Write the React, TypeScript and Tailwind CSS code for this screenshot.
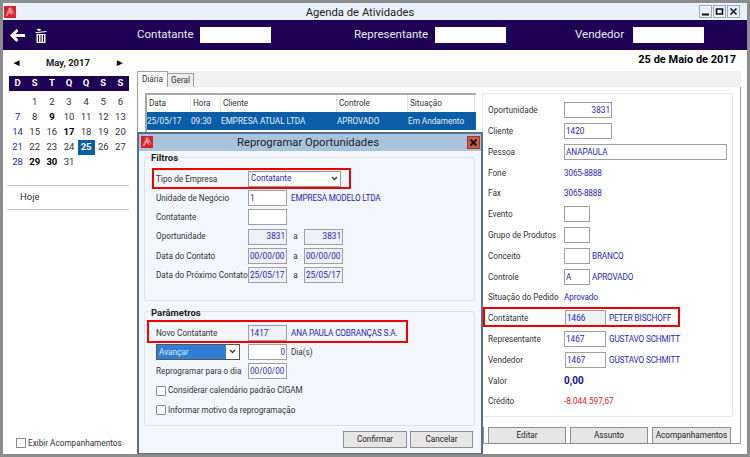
import type { ReactNode } from 'react'

const FONT = "font-['Roboto','Liberation_Sans',Arial,sans-serif]"

function Logo({ className }: { className: string }) {
  return (
    <svg viewBox="0 0 12 12" className={className}>
      <rect width="12" height="12" fill="#d8232a" />
      <path d="M1 11 L5 2 L7 1 L11 9 L8 6 L6 8 L5 5 L3 9 Z" fill="#f08080" />
      <path d="M5 2 L8 9 M3 10 L6 4" stroke="#f7d0d0" strokeWidth="0.7" fill="none" />
    </svg>
  )
}

function Trash() {
  return (
    <svg viewBox="0 0 12 15" className="w-[12px] h-[15px]" fill="#ffffff">
      <path d="M0.5 4.2 L11.5 3 L11.5 4 L0.5 5.2 Z" />
      <path d="M1.5 1.5 L4 0.5 L6.5 2 L4 3 Z" />
      <path d="M1.5 6 H10.5 V15 H1.5 Z M3 7 V14 H4 V7 Z M5.5 7 V14 H6.5 V7 Z M8 7 V14 H9 V7 Z" fillRule="evenodd" />
    </svg>
  )
}

function Arrow() {
  return (
    <svg viewBox="0 0 15 13" className="w-[15px] h-[13px]" fill="#ffffff">
      <path d="M0 6.5 L6.5 0 L8.5 2 L5.5 5 H15 V8 H5.5 L8.5 11 L6.5 13 Z" />
    </svg>
  )
}

function Chevron() {
  return (
    <svg viewBox="0 0 7 5" className="w-[7px] h-[5px] shrink-0" fill="none" stroke="#333333" strokeWidth="1.3">
      <path d="M1 1 L3.5 3.5 L6 1" />
    </svg>
  )
}

function WinButton({ kind }: { kind: 'min' | 'max' | 'close' }) {
  return (
    <span className="w-[13px] h-[13px] border border-[#9aa8b8] bg-[#e9f1fc] flex items-center justify-center">
      <svg viewBox="0 0 9 9" className="w-[9px] h-[9px]" fill="none" stroke="#111111" strokeWidth="1.6">
        {kind === 'min' && <path d="M1 7.5 H8" strokeWidth="2" />}
        {kind === 'max' && <path d="M1.5 2 H7.5 V7 H1.5 Z" />}
        {kind === 'close' && <path d="M1.5 1.5 L7.5 7.5 M7.5 1.5 L1.5 7.5" />}
      </svg>
    </span>
  )
}

function Field({ children, className = '', gray }: { children?: ReactNode; className?: string; gray?: boolean }) {
  return (
    <div
      className={`h-[16px] border border-[#a0a0a0] flex items-center px-[1px] text-[8.2px] text-[#2a1fc0] leading-none overflow-hidden shrink-0 whitespace-nowrap ${
        gray ? 'bg-[#eef2f6]' : 'bg-white'
      } ${className}`}
    >
      {children}
    </div>
  )
}

function Btn({ children, className = '' }: { children?: ReactNode; className?: string }) {
  return (
    <div className={`h-[17px] border border-[#8f8f8f] bg-[#e6e6e6] flex items-center justify-center text-[8.2px] text-[#222] ${className}`}>
      {children}
    </div>
  )
}

function Row({ label, children }: { label: string; children?: ReactNode }) {
  return (
    <div className="relative flex items-center h-[20.8px] text-[8.2px] text-[#333]">
      <span className="shrink-0 w-[76px] whitespace-nowrap">{label}</span>
      {children}
    </div>
  )
}

function Blue({ children, className = '' }: { children: ReactNode; className?: string }) {
  return <span className={`text-[8.2px] tracking-[-0.15px] text-[#2a1fc0] whitespace-nowrap ${className}`}>{children}</span>
}

function RedBox({ className }: { className: string }) {
  return <div className={`absolute border-[2px] border-[#f00000] pointer-events-none ${className}`} />
}

const weeks: (number | null)[][] = [
  [null, 1, 2, 3, 4, 5, 6],
  [7, 8, 9, 10, 11, 12, 13],
  [14, 15, 16, 17, 18, 19, 20],
  [21, 22, 23, 24, 25, 26, 27],
  [28, 29, 30, 31, null, null, null],
]
const boldDays = [9, 17, 29, 30]

function Calendar() {
  return (
    <div className="px-[6px]">
      <div className="flex items-center justify-between px-[5px] h-[26px] text-[9.5px] font-bold text-[#222]">
        <span className="text-[7px] text-black">◀</span>
        <span>May, 2017</span>
        <span className="text-[7px] text-black">▶</span>
      </div>
      <div className="grid grid-cols-7 h-[15px] bg-[#1e0055] text-white text-[9.5px] font-bold items-center text-center w-[120px]">
        {['D', 'S', 'T', 'Q', 'Q', 'S', 'S'].map((d, i) => (
          <span key={i}>{d}</span>
        ))}
      </div>
      <div className="grid grid-cols-7 w-[120px] mt-[4px] text-[9.5px] text-center">
        {weeks.flat().map((d, i) => (
          <span
            key={i}
            className={`h-[15px] flex items-center justify-center ${
              d === 25
                ? 'bg-[#0a5ea8] text-white font-bold'
                : i % 7 === 0
                  ? 'text-[#2a1fc0]'
                  : d !== null && boldDays.includes(d)
                    ? 'font-bold text-black'
                    : 'text-[#333]'
            }`}
          >
            {d}
          </span>
        ))}
      </div>
    </div>
  )
}

function Grid() {
  const cols = ['w-[44px]', 'w-[30px]', 'w-[116px]', 'w-[71px]', 'w-[67px]']
  const head = ['Data', 'Hora', 'Cliente', 'Controle', 'Situação']
  const row = ['25/05/17', '09:30', 'EMPRESA ATUAL LTDA', 'APROVADO', 'Em Andamento']
  return (
    <div className="w-[331px] h-[320px] border-t-[2px] border-l-[2px] border-[#a8a8a8] bg-white text-[8.2px]">
      <div className="flex h-[17px] items-center text-[#333]">
        {head.map((h, i) => (
          <span key={h} className={`${cols[i]} pl-[2px] h-full flex items-center border-r border-[#e4e4e4]`}>{h}</span>
        ))}
      </div>
      <div className="flex h-[18px] items-center bg-[#0a5ea8] text-[#e8f0fa]">
        {row.map((h, i) => (
          <span key={h} className={`${cols[i]} whitespace-nowrap`}>{h}</span>
        ))}
      </div>
    </div>
  )
}

function Details() {
  return (
    <div className="w-[251px] h-[324px] border border-[#e6e8ea] rounded-[2px] pl-[5px] pt-[6px]">
      <Row label="Oportunidade"><Field className="w-[48px] justify-end">3831</Field></Row>
      <Row label="Cliente"><Field className="w-[48px]">1420</Field></Row>
      <Row label="Pessoa"><Field className="w-[163px]">ANAPAULA</Field></Row>
      <Row label="Fone"><Blue>3065-8888</Blue></Row>
      <Row label="Fax"><Blue>3065-8888</Blue></Row>
      <Row label="Evento"><Field className="w-[26px]" /></Row>
      <Row label="Grupo de Produtos"><Field className="w-[26px]" /></Row>
      <Row label="Conceito"><Field className="w-[26px]" /><Blue className="ml-[2px]">BRANCO</Blue></Row>
      <Row label="Controle"><Field className="w-[26px]">A</Field><Blue className="ml-[2px]">APROVADO</Blue></Row>
      <Row label="Situação do Pedido"><Blue>Aprovado</Blue></Row>
      <Row label="Contatante">
        <Field className="w-[41px] ml-[1px]" gray>1466</Field>
        <Blue className="ml-[3px]">PETER BISCHOFF</Blue>
        <RedBox className="-left-[5px] -top-[1px] w-[197px] h-[20px]" />
      </Row>
      <Row label="Representante"><Field className="w-[42px]">1467</Field><Blue className="ml-[3px]">GUSTAVO SCHMITT</Blue></Row>
      <Row label="Vendedor"><Field className="w-[41px] ml-[1px]">1467</Field><Blue className="ml-[3px]">GUSTAVO SCHMITT</Blue></Row>
      <Row label="Valor"><span className="text-[10px] font-bold text-[#14148c]">0,00</span></Row>
      <Row label="Crédito"><span className="text-[8.2px] text-[#e02020]">-8.044.597,67</span></Row>
    </div>
  )
}

function DialogRow({ label, children }: { label: string; children?: ReactNode }) {
  return (
    <div className="relative flex items-center h-[19.3px] text-[8.2px] text-[#333]">
      <span className="w-[92px] shrink-0 whitespace-nowrap">{label}</span>
      {children}
    </div>
  )
}

function Check({ label }: { label: string }) {
  return (
    <div className="flex items-center h-[19.3px] gap-[2px] text-[8.2px] text-[#333] whitespace-nowrap">
      <span className="w-[10px] h-[10px] border border-[#8a8a8a] bg-white rounded-[1px]" />
      {label}
    </div>
  )
}

function Dialog() {
  const f = 'w-[39px]'
  return (
    <div className="absolute left-[134px] top-[129px] w-[346px] h-[323px] border-[2px] border-[#5a6f85] bg-[#a9c3de] flex flex-col">
      <div className="relative h-[17px] flex items-center justify-center pr-[4px] pt-[1px] text-[11.25px] text-[#222] shrink-0">
        <Logo className="absolute left-[2px] top-[2px] w-[12px] h-[12px]" />
        Reprogramar Oportunidades
        <span className="absolute right-[1px] top-[2px] w-[13px] h-[13px] bg-[#cf5a44] border border-[#9c3a2a] flex items-center justify-center">
          <svg viewBox="0 0 9 9" className="w-[9px] h-[9px]" fill="none" stroke="#111111" strokeWidth="1.8">
            <path d="M1.5 1.5 L7.5 7.5 M7.5 1.5 L1.5 7.5" />
          </svg>
        </span>
      </div>
      <div className="flex-1 bg-[#f3f7fb] px-[5px] pt-[6px] flex flex-col gap-[10px]">
        <div className="relative border border-[#dde3e9] rounded-[3px] w-[331px] h-[144px] pl-[11px] pt-[11px]">
          <span className="absolute left-[6px] -top-[6px] text-[9.5px] font-bold text-[#222] bg-[#f3f7fb] leading-[11px]">Filtros</span>
          <DialogRow label="Tipo de Empresa">
            <div className="w-[93px] h-[16px] border border-[#9a9a9a] bg-white flex items-center justify-between px-[2px] text-[#2a1fc0]">
              Contatante
              <Chevron />
            </div>
            <RedBox className="-left-[4px] -top-[1px] w-[199px] h-[21px]" />
          </DialogRow>
          <DialogRow label="Unidade de Negócio"><Field className={f}>1</Field><Blue className="ml-[4px]">EMPRESA MODELO LTDA</Blue></DialogRow>
          <DialogRow label="Contatante"><Field className={f} /></DialogRow>
          <DialogRow label="Oportunidade"><Field className={`${f} justify-end`} gray>3831</Field><span className="w-[17px] text-center">a</span><Field className={`${f} justify-end`} gray>3831</Field></DialogRow>
          <DialogRow label="Data do Contato"><Field className={f} gray>00/00/00</Field><span className="w-[17px] text-center">a</span><Field className={f} gray>00/00/00</Field></DialogRow>
          <DialogRow label="Data do Próximo Contato"><Field className={f} gray>25/05/17</Field><span className="w-[17px] text-center">a</span><Field className={f} gray>25/05/17</Field></DialogRow>
        </div>
        <div className="relative border border-[#dde3e9] rounded-[3px] w-[331px] h-[115px] pl-[11px] pt-[11px]">
          <span className="absolute left-[6px] -top-[5px] text-[9.5px] font-bold text-[#222] bg-[#f3f7fb] leading-[11px]">Parâmetros</span>
          <DialogRow label="Novo Contatante">
            <Field className={f} gray>1417</Field>
            <Blue className="ml-[4px]">ANA PAULA COBRANÇAS S.A.</Blue>
            <RedBox className="-left-[9px] -top-[3px] w-[261px] h-[23px]" />
          </DialogRow>
          <div className="flex items-center h-[19.3px] text-[8.2px] text-[#333]">
            <div className="w-[84px] h-[16px] border border-[#555] bg-white flex items-center justify-between mr-[8px]">
              <span className="w-[69px] h-[14px] bg-[#2f7fd6] text-[#d8e8fa] flex items-center pl-[2px]">Avançar</span>
              <span className="pr-[3px]"><Chevron /></span>
            </div>
            <Field className={`${f} justify-end`}>0</Field>
            <span className="ml-[4px]">Dia(s)</span>
          </div>
          <DialogRow label="Reprogramar para o dia"><Field className={f}>00/00/00</Field></DialogRow>
          <Check label="Considerar calendário padrão CIGAM" />
          <Check label="Informar motivo da reprogramação" />
        </div>
        <div className="flex justify-end gap-[3px] pr-[3px] -mt-[5px]">
          <Btn className="w-[64px] h-[15px]">Confirmar</Btn>
          <Btn className="w-[63px] h-[15px]">Cancelar</Btn>
        </div>
      </div>
    </div>
  )
}

export default function App() {
  return (
    <div className={`${FONT} relative w-[750px] h-[457px] border-[3px] border-[#8c8c8c] bg-white overflow-hidden flex flex-col`}>
      <div className="relative h-[17px] bg-[#e9f1fc] flex items-center justify-center pr-[30px] pt-[3px] text-[11.25px] text-[#222] shrink-0">
        <Logo className="absolute left-[1px] top-[3px] w-[12px] h-[12px]" />
        Agenda de Atividades
        <div className="absolute right-[7px] top-[2px] flex gap-[1px]">
          <WinButton kind="min" />
          <WinButton kind="max" />
          <WinButton kind="close" />
        </div>
      </div>
      <div className="h-[30px] bg-[#1e0055] flex items-center text-[11.5px] text-[#e8e8f4] shrink-0">
        <div className="w-[134px] flex items-center gap-[10px] pl-[7px]">
          <Arrow />
          <Trash />
        </div>
        <span className="w-[63px]">Contatante</span>
        <div className="w-[71px] h-[16px] bg-white" />
        <span className="ml-[83px] w-[81px]">Representante</span>
        <div className="w-[71px] h-[16px] bg-white" />
        <span className="ml-[69px] w-[58px]">Vendedor</span>
        <div className="w-[71px] h-[16px] bg-white" />
      </div>
      <div className="flex flex-1 min-h-0">
        <div className="w-[130px] shrink-0 flex flex-col h-full">
          <Calendar />
          <div className="mx-[4px] mt-[15px] h-[25px] border-y border-[#c4c4c4] flex items-center pl-[13px] text-[9.5px] text-[#333]">Hoje</div>
          <label className="mt-auto mb-[5px] ml-[13px] flex items-center gap-[2px] text-[8.2px] text-[#333] whitespace-nowrap">
            <span className="w-[10px] h-[10px] border border-[#8a8a8a] bg-white" />
            <span>Exibir Acompanhamentos</span>
          </label>
        </div>
        <div className="w-[607px] ml-[4px] flex flex-col">
          <div className="h-[21px] text-right pr-[8px] pt-[3px] text-[11px] font-bold text-black leading-[14px] shrink-0">25 de Maio de 2017</div>
          <div className="h-[16px] bg-[#f1f1f1] flex items-end text-[8.2px] text-[#333] shrink-0 -mb-px relative z-10 w-[604px]">
            <span className="h-[16px] px-[4px] bg-white border-x border-t border-[#a0a0a0] flex items-center">Diária</span>
            <span className="h-[14px] px-[3px] bg-[#ececec] border-r border-t border-[#a0a0a0] flex items-center">Geral</span>
          </div>
          <div className="h-[358px] border border-[#9a9a9a] bg-white pl-[7px] pt-[6px] w-[604px] flex flex-col">
            <div className="flex gap-[6px]">
              <Grid />
              <Details />
            </div>
            <div className="flex gap-[4px] pl-[261px] mt-[10px]">
              <Btn className="w-[78px]" />
              <Btn className="w-[78px]">Editar</Btn>
              <Btn className="w-[78px]">Assunto</Btn>
              <Btn className="w-[79px]">Acompanhamentos</Btn>
            </div>
          </div>
        </div>
      </div>
      <Dialog />
    </div>
  )
}
